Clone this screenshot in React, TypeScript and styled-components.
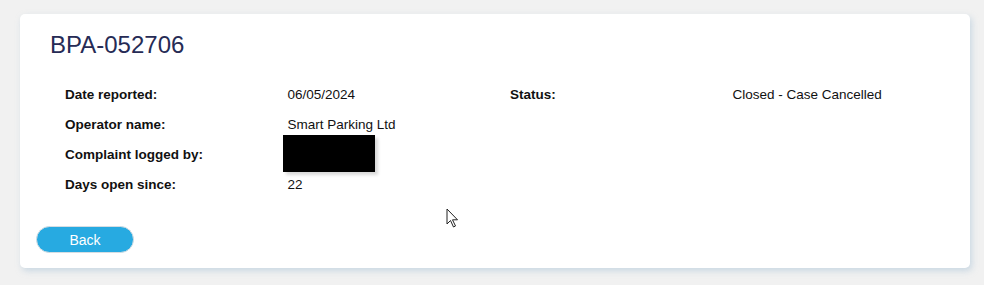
import React from 'react';
import styled, { createGlobalStyle } from 'styled-components';

const GlobalStyle = createGlobalStyle`
	html, body {
		margin: 0;
		padding: 0;
		background: #f1f1f1;
		font-family: "Liberation Sans", Arial, sans-serif;
	}
`;

const Page = styled.div`
	position: relative;
	width: 984px;
	height: 285px;
	padding: 14px 14px 0 20px;
	box-sizing: border-box;
`;

const Card = styled.div`
	background: #fff;
	border-radius: 5px;
	height: 254px;
	box-shadow: 2px 3px 6px rgba(170, 195, 215, 0.55);
	padding: 19px 30px 0 30px;
	box-sizing: border-box;
`;

const Title = styled.h1`
	margin: 0;
	font-size: 24px;
	font-weight: 400;
	color: #262b55;
	line-height: 24px;
`;

const Details = styled.div`
	display: grid;
	grid-template-columns: repeat(4, 1fr);
	grid-auto-rows: 30px;
	margin-top: 30px;
	font-size: 13.5px;
	color: #111;
`;

const Cell = styled.div<{ $bold?: boolean }>`
	position: relative;
	padding-left: 15px;
	font-weight: ${(p) => (p.$bold ? 700 : 400)};
	line-height: 16px;
`;

const Redacted = styled.div`
	position: absolute;
	left: 10px;
	top: -12px;
	width: 92px;
	height: 37px;
	background: #000;
	box-shadow: 3px 3px 3px rgba(0, 0, 0, 0.15);
`;

const Footer = styled.div`
	margin-top: 19px;
	margin-left: -14px;
`;

const BackButton = styled.button`
	width: 98px;
	height: 27px;
	border-radius: 14px;
	border: 1px solid #d6dde2;
	background: #27aae1;
	color: #fff;
	font-family: "Liberation Sans", Arial, sans-serif;
	font-size: 14px;
	cursor: pointer;
`;

const Pointer = styled.svg`
	position: absolute;
	left: 446px;
	top: 208px;
`;

const rows: [string, React.ReactNode, string?, string?][] = [
	['Date reported:', '06/05/2024', 'Status:', 'Closed - Case Cancelled'],
	['Operator name:', 'Smart Parking Ltd'],
	['Complaint logged by:', <Redacted key="r" />],
	['Days open since:', '22'],
];

const App = () => {
	return (
		<>
			<GlobalStyle />
			<Page>
				<Card>
					<Title>BPA-052706</Title>
					<Details>
						{rows.map((row, i) => (
							<React.Fragment key={i}>
								<Cell $bold>{row[0]}</Cell>
								<Cell>{row[1]}</Cell>
								<Cell $bold>{row[2]}</Cell>
								<Cell>{row[3]}</Cell>
							</React.Fragment>
						))}
					</Details>
					<Footer>
						<BackButton>Back</BackButton>
					</Footer>
				</Card>
				<Pointer width="14" height="22" viewBox="0 0 14 22">
					<path d="M1 1 L1 16 L4.5 12.5 L7.5 19 L9.5 18 L6.5 11.8 L11.5 11.8 Z" fill="#fff" stroke="#222" strokeWidth="1" strokeLinejoin="round" />
				</Pointer>
			</Page>
		</>
	);
};

export default App;
